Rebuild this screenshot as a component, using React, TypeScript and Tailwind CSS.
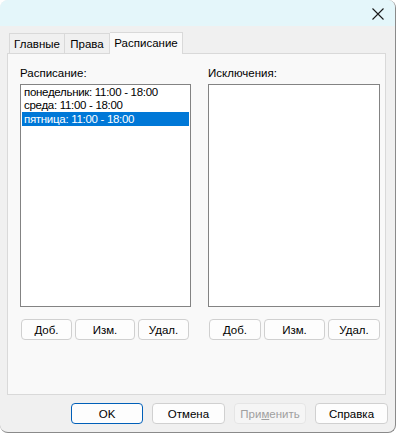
import React from "react";

const font = { fontFamily: '"Liberation Sans", Arial, sans-serif' };

function Btn({
  children,
  w,
  tone = "border-[#d0d0d0] bg-[#fdfdfd] text-black",
}: {
  children: React.ReactNode;
  w: string;
  tone?: string;
}) {
  return (
    <div className={`${w} h-[21px] flex items-center justify-center rounded-[4px] border text-[11.5px] leading-[14px] ${tone}`}>
      {children}
    </div>
  );
}

export default function App() {
  return (
    <div className="w-[396px] h-[434px] bg-white text-[11.5px] leading-[14px]" style={font}>
      <div className="w-[396px] h-[433px] rounded-lg border-r border-b border-[#8a8a8a] bg-[#f0f0f0] flex flex-col overflow-hidden">
        <div className="h-[26px] bg-[#e4f6fa] flex items-center justify-end pr-[10px]">
          <svg width="12" height="12" viewBox="0 0 12 12" className="mt-[2px] mr-[1px]">
            <path d="M0.5 0.5 L11.5 11.5 M11.5 0.5 L0.5 11.5" stroke="#1a1a1a" strokeWidth="1.1" />
          </svg>
        </div>
        <div className="pl-[7px] pr-[9px] pt-[5px] flex flex-col">
          <div className="flex items-end h-[22px] pl-[2px] relative z-10">
            <div className="w-[56px] h-[20px] border border-[#d9d9d9] border-b-0 bg-[#f0f0f0] flex items-center justify-center text-black">
              Главные
            </div>
            <div className="w-[45px] h-[20px] border border-l-0 border-[#d9d9d9] border-b-0 bg-[#f0f0f0] flex items-center justify-center text-black">
              Права
            </div>
            <div className="w-[73px] h-[22px] -mb-[1px] border border-l-0 border-[#d9d9d9] border-b-0 bg-[#f9f9f9] flex items-center justify-center text-black pb-[1px]">
              Расписание
            </div>
          </div>
          <div className="h-[342px] border border-[#d9d9d9] bg-[#f9f9f9] pl-[12px] pr-[5px] pt-[12px] flex gap-[17px]">
            <div className="flex flex-col w-[172px]">
              <div className="h-[18px] text-black">Расписание:</div>
              <div className="h-[223px] border border-[#838383] bg-white p-[1px] flex flex-col text-[11.5px] tracking-[-0.3px]">
                <div className="h-[13px] px-[2px] flex items-center text-black leading-[13px]">понедельник: 11:00 - 18:00</div>
                <div className="h-[13px] px-[2px] flex items-center text-black leading-[13px]">среда: 11:00 - 18:00</div>
                <div className="h-[14px] px-[2px] flex items-center bg-[#0078d7] text-white leading-[13px]">пятница: 11:00 - 18:00</div>
              </div>
              <div className="flex gap-[3px] mt-[12px] pl-[1px]">
                <Btn w="w-[51px]">Доб.</Btn>
                <Btn w="w-[60px]">Изм.</Btn>
                <Btn w="w-[51px]">Удал.</Btn>
              </div>
            </div>
            <div className="flex flex-col w-[172px]">
              <div className="h-[18px] text-black">Исключения:</div>
              <div className="h-[223px] border border-[#838383] bg-white"></div>
              <div className="flex gap-[3px] mt-[12px] pl-[1px]">
                <Btn w="w-[52px]">Доб.</Btn>
                <Btn w="w-[61px]">Изм.</Btn>
                <Btn w="w-[52px]">Удал.</Btn>
              </div>
            </div>
          </div>
          <div className="flex justify-end gap-[9px] pt-[8px] mr-[-2px]">
            <Btn w="w-[72px]" tone="border-[#005fb8] bg-[#fdfdfd] text-black">OK</Btn>
            <Btn w="w-[73px]">Отмена</Btn>
            <Btn w="w-[72px]" tone="bg-[#f5f5f5] border-[#e5e5e5] text-[#a0a0a0]">
              <span>При<span className="underline">м</span>енить</span>
            </Btn>
            <Btn w="w-[73px]">Справка</Btn>
          </div>
        </div>
      </div>
    </div>
  );
}
